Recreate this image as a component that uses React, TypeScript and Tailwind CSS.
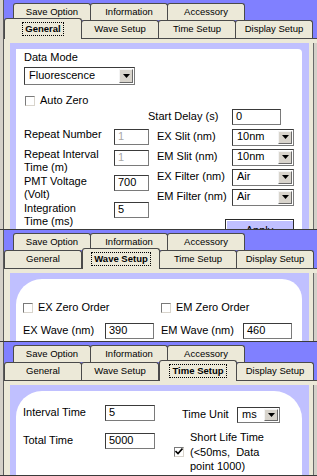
import React, { ReactNode } from "react";

const BLUE = "bg-[#8080ff]";

interface TabProps {
  label: string;
  active?: boolean;
  top?: boolean;
}

const Tab: React.FC<TabProps> = ({ label, active, top }) => {
  if (active) {
    return (
      <div className="relative z-10 -mb-px -mt-[2px] flex h-[21px] w-[78px] shrink-0 items-center justify-center rounded-t-[3px] border border-b-0 border-[#4a4a4a] bg-[#ece9d8] text-[9.5px] font-bold text-black">
        <span className="border border-dotted border-black px-[2px] leading-[12px]">{label}</span>
      </div>
    );
  }
  return (
    <div
      className={`-ml-px flex w-[78px] shrink-0 items-center justify-center rounded-t-[3px] border border-b-0 border-[#4a4a4a] bg-[#ece9d8] text-[9.5px] text-black first:ml-0 ${
        top ? "h-[17px]" : "h-[18px]"
      }`}
    >
      {label}
    </div>
  );
};

const TopTabs = () => (
  <div className="flex h-[20px] items-end pl-[9px]">
    <Tab label="Save Option" top />
    <Tab label="Information" top />
    <Tab label="Accessory" top />
  </div>
);

const SecondTabs: React.FC<{ active: string }> = ({ active }) => (
  <div className="flex h-[18px] items-end">
    {["General", "Wave Setup", "Time Setup", "Display Setup"].map((t) => (
      <Tab key={t} label={t} active={t === active} />
    ))}
  </div>
);

const Input: React.FC<{ value: string; className?: string; disabled?: boolean }> = ({
  value,
  className = "",
  disabled,
}) => (
  <div
    className={`flex h-[16px] shrink-0 items-center border border-[#3a3a3a] border-b-[#7a7a7a] border-r-[#7a7a7a] bg-white pl-[3px] text-[11px] ${
      disabled ? "text-[#a8a8a8]" : "text-black"
    } ${className}`}
  >
    {value}
  </div>
);

const Arrow = () => (
  <div className="flex h-full w-[14px] items-center justify-center border border-[#f4f4f4] border-b-[#6a6a6a] border-r-[#6a6a6a] bg-[#d8d4cc]">
    <svg width="7" height="4" viewBox="0 0 7 4">
      <path d="M0 0h7L3.5 4z" fill="#000" />
    </svg>
  </div>
);

const Select: React.FC<{ value: string; className?: string }> = ({ value, className = "" }) => (
  <div
    className={`flex shrink-0 items-center border border-[#3a3a3a] border-b-[#7a7a7a] border-r-[#7a7a7a] bg-white p-px text-[11px] text-black ${className}`}
  >
    <span className="flex-1 pl-[3px]">{value}</span>
    <Arrow />
  </div>
);

const Check: React.FC<{ checked?: boolean }> = ({ checked }) => (
  <div className="flex h-[10px] w-[10px] shrink-0 items-center justify-center border border-[#7a7a7a] border-b-[#d8d4cc] border-r-[#d8d4cc] bg-white">
    {checked && (
      <svg width="8" height="7" viewBox="0 0 8 7">
        <path d="M0.5 3l2.5 2.5 4.5-5" stroke="#000" strokeWidth="1.6" fill="none" />
      </svg>
    )}
  </div>
);

interface PanelProps {
  active: string;
  height: string;
  whiteClass: string;
  children: ReactNode;
}

const Panel: React.FC<PanelProps> = ({ active, height, whiteClass, children }) => (
  <div className={`flex overflow-hidden border-b border-[#3a3a3a] ${height}`}>
    <div className="w-[4px] shrink-0 border-r border-[#5a5a5a] bg-[#d4d0c8]" />
    <div className={`flex min-w-0 flex-1 flex-col ${BLUE}`}>
      <TopTabs />
      <SecondTabs active={active} />
      <div className="flex min-h-0 flex-1 border-t border-[#4a4a4a] bg-[#ece9d8] pl-[6px] pt-[4px]">
        <div className="flex min-h-0 flex-1 flex-col bg-[#c0c0ff] pl-[6px] pr-[7px] pt-[6px]">
          <div className={`min-h-0 flex-1 bg-white ${whiteClass}`}>{children}</div>
        </div>
        <div className="w-[4px] shrink-0" />
        <div className="w-[4px] shrink-0 border-l border-[#6a6a6a] bg-[#d4d0c8]" />
      </div>
    </div>
  </div>
);

const GeneralPanel = () => (
  <Panel active="General" height="h-[230px]" whiteClass="rounded-tr-[4px]">
    <div className="pl-[8px] pt-[2px] leading-[13.5px]">
      <div>Data Mode</div>
      <Select value="Fluorescence" className="mt-[2px] h-[18px] w-[111px]" />
      <div className="mt-[9px] flex h-[14px] items-center gap-[5px] pl-px">
        <Check />
        <span>Auto Zero</span>
      </div>
      <div className="flex">
        <div className="w-[133px] shrink-0 pt-[20px]">
          <div className="flex h-[20px] items-start">
            <span className="w-[90px]">Repeat Number</span>
            <Input value="1" disabled className="mt-px w-[35px]" />
          </div>
          <div className="flex h-[27px] items-start">
            <span className="w-[90px]">
              Repeat Interval
              <br />
              Time (m)
            </span>
            <Input value="1" disabled className="mt-[2px] w-[35px]" />
          </div>
          <div className="flex h-[27px] items-start">
            <span className="w-[90px]">
              PMT Voltage
              <br />
              (Volt)
            </span>
            <Input value="700" className="w-[35px]" />
          </div>
          <div className="flex h-[27px] items-start">
            <span className="w-[90px]">
              Integration
              <br />
              Time (ms)
            </span>
            <Input value="5" className="w-[35px]" />
          </div>
        </div>
        <div className="flex flex-col gap-[3px]">
          <div className="flex h-[18px] items-center">
            <span className="-ml-[9px] w-[84px] whitespace-nowrap">Start Delay (s)</span>
            <Input value="0" className="w-[49px]" />
          </div>
          {[
            ["EX Slit (nm)", "10nm"],
            ["EM Slit (nm)", "10nm"],
            ["EX Filter (nm)", "Air"],
            ["EM Filter (nm)", "Air"],
          ].map(([l, v]) => (
            <div key={l} className="flex h-[17px] items-center">
              <span className="w-[75px]">{l}</span>
              <Select value={v} className="h-[17px] w-[62px]" />
            </div>
          ))}
          <div className="ml-[68px] mt-[10px] flex h-[22px] w-[69px] justify-center border border-[#2a2a2a] bg-[#c0c0ff] pt-[4px] shadow-[inset_1px_1px_0_#ffffff]">
            Apply
          </div>
        </div>
      </div>
    </div>
  </Panel>
);

const WavePanel = () => (
  <Panel active="Wave Setup" height="h-[112px]" whiteClass="rounded-tl-[26px] rounded-tr-[20px]">
    <div className="pl-[7px] pt-[22px] leading-[13.5px]">
      <div className="flex">
        <div className="flex w-[138px] items-center gap-[5px]">
          <Check />
          <span>EX Zero Order</span>
        </div>
        <div className="flex items-center gap-[5px]">
          <Check />
          <span>EM Zero Order</span>
        </div>
      </div>
      <div className="mt-[8px] flex">
        <div className="flex w-[138px] items-center">
          <span className="w-[82px]">EX Wave (nm)</span>
          <Input value="390" className="w-[49px]" />
        </div>
        <div className="flex items-center">
          <span className="w-[82px]">EM Wave (nm)</span>
          <Input value="460" className="w-[49px]" />
        </div>
      </div>
    </div>
  </Panel>
);

const TimePanel = () => (
  <Panel active="Time Setup" height="h-[134px]" whiteClass="rounded-tl-[26px] rounded-tr-[28px]">
    <div className="flex pl-[7px] leading-[13.5px]">
      <div className="w-[151px] shrink-0 pt-[14px]">
        <div className="flex h-[16px] items-center">
          <span className="w-[82px]">Interval Time</span>
          <Input value="5" className="w-[50px] text-[10px]" />
        </div>
        <div className="mt-[12px] flex h-[16px] items-center">
          <span className="w-[82px]">Total Time</span>
          <Input value="5000" className="w-[50px] text-[10px]" />
        </div>
      </div>
      <div className="pt-[16px]">
        <div className="flex h-[16px] items-center pl-[8px]">
          <span className="w-[55px]">Time Unit</span>
          <Select value="ms" className="h-[16px] w-[43px]" />
        </div>
        <div className="mt-[7px] flex items-center gap-[6px]">
          <Check checked />
          <span className="leading-[14.5px]">
            Short Life Time
            <br />
            (&lt;50ms,&nbsp; Data
            <br />
            point 1000)
          </span>
        </div>
      </div>
    </div>
  </Panel>
);

export default function App() {
  return (
    <div className="h-[476px] w-[317px] overflow-hidden bg-[#d4d0c8] font-['Liberation_Sans',Arial,sans-serif] text-[11px] text-black">
      <GeneralPanel />
      <WavePanel />
      <TimePanel />
    </div>
  );
}
